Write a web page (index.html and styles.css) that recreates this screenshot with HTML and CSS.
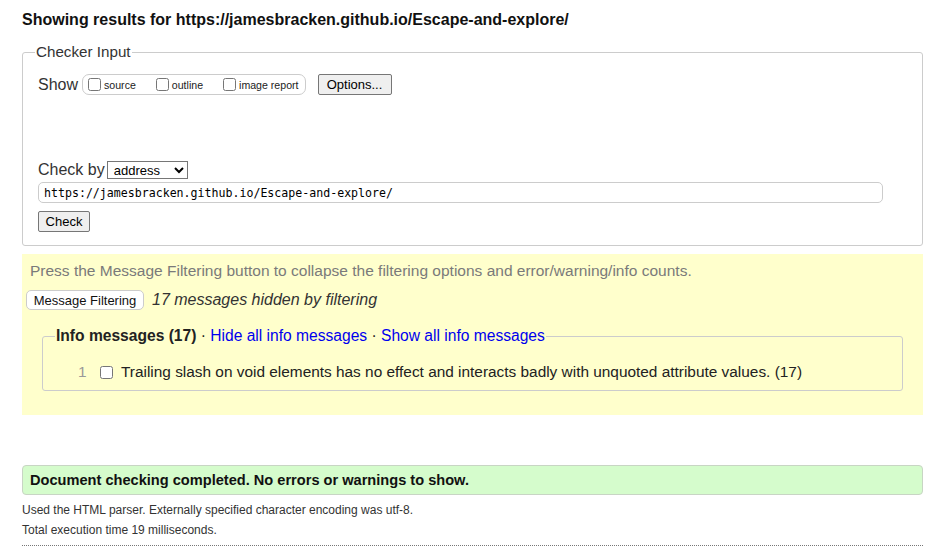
FILE: index.html
```html
<!DOCTYPE html>
<html>
<head>
<meta charset="utf-8">
<title>Nu Html Checker</title>
<link rel="stylesheet" href="styles.css">
</head>
<body>
<h2 class="title">Showing results for https://jamesbracken.github.io/Escape-and-explore/</h2>

<fieldset class="checker">
  <legend class="checker-legend">Checker Input</legend>
  <div class="show-row">
    <span class="lbl">Show</span>
    <span class="opts">
      <label class="opt"><input type="checkbox" class="cb">source</label>
      <label class="opt"><input type="checkbox" class="cb">outline</label>
      <label class="opt"><input type="checkbox" class="cb">image report</label>
    </span>
    <button class="btn btn-options">Options...</button>
  </div>
  <div class="checkby-row">
    <span class="lbl">Check by</span>
    <select class="sel"><option>address</option></select>
  </div>
  <input class="url" type="text" value="https://jamesbracken.github.io/Escape-and-explore/">
  <div class="check-row"><button class="btn btn-check">Check</button></div>
</fieldset>

<section class="filters">
  <p class="hint">Press the Message Filtering button to collapse the filtering options and error/warning/info counts.</p>
  <div class="filter-row">
    <button class="btn-filter">Message Filtering</button>
    <span class="hidden-count">17 messages hidden by filtering</span>
  </div>
  <fieldset class="info">
    <legend class="info-legend"><strong>Info messages (17)</strong> · <a class="lnk" href="#">Hide all info messages</a> · <a class="lnk" href="#">Show all info messages</a></legend>
    <div class="msg-row">
      <span class="num">1</span>
      <input type="checkbox" class="cb cb-msg">
      <span class="msg">Trailing slash on void elements has no effect and interacts badly with unquoted attribute values. (17)</span>
    </div>
  </fieldset>
</section>

<p class="success">Document checking completed. No errors or warnings to show.</p>
<p class="stats">Used the HTML parser. Externally specified character encoding was utf-8.</p>
<p class="stats">Total execution time 19 milliseconds.</p>
<hr class="rule">
</body>
</html>
```
FILE: styles.css
```css
html, body {
  margin: 0;
  padding: 0;
  background: #fff;
}
body {
  padding: 0 13px 0 22px;
  font-family: "Liberation Sans", Arial, sans-serif;
  color: #222;
}
.title {
  margin: 0;
  padding-top: 11px;
  font-size: 16px;
  line-height: 18px;
  font-weight: bold;
  color: #111;
}
.checker {
  margin: 14px 0 0 0;
  padding: 13px 15px 13px 15px;
  border: 1px solid #ccc;
  border-radius: 3px;
}
.checker-legend {
  padding: 0 1px;
  margin-left: -3px;
  font-size: 15.2px;
  line-height: 18px;
  color: #333;
}
.show-row {
  display: flex;
  align-items: center;
  height: 21px;
}
.lbl {
  font-size: 16px;
  line-height: 19px;
  color: #333;
  margin-right: 4px;
}
.opts {
  display: inline-flex;
  align-items: center;
  height: 19px;
  padding: 0 6px 0 1px;
  border: 1px solid #ccc;
  border-radius: 7px;
  gap: 16px;
}
.opt {
  display: inline-flex;
  align-items: center;
  font-size: 10.6px;
  color: #222;
}
.cb {
  width: 13px;
  height: 13px;
  margin: 0 3px 0 4px;
}
.btn {
  font-family: "Liberation Sans", Arial, sans-serif;
  font-size: 13px;
  height: 21px;
  padding: 0 8px;
  border: 1px solid #767676;
  border-radius: 2px;
  background: #efefef;
  color: #000;
}
.btn-options {
  margin-left: 12px;
  width: 74px;
}
.checkby-row {
  display: flex;
  align-items: center;
  margin-top: 65px;
  height: 19px;
}
.checkby-row .lbl {
  margin-right: 2px;
}
.sel {
  width: 81px;
  height: 18px;
  font-family: "Liberation Sans", Arial, sans-serif;
  font-size: 13px;
  border: 1px solid #767676;
  border-radius: 0;
  background: #fff;
  padding: 0 0 0 2px;
}
.url {
  display: block;
  box-sizing: border-box;
  margin-top: 3px;
  width: 845px;
  height: 21px;
  padding: 0 5px;
  border: 1px solid #ccc;
  border-radius: 5px;
  font-family: "DejaVu Sans Mono", "Liberation Mono", monospace;
  font-size: 11.6px;
  color: #000;
}
.check-row {
  margin-top: 8px;
  display: flex;
}
.btn-check {
  width: 52px;
  padding: 0;
}
.filters {
  margin-top: 8px;
  background: #ffc;
  padding: 8px 20px 24px 4px;
}
.hint {
  margin: 0;
  padding-left: 4px;
  font-size: 15.5px;
  line-height: 18px;
  color: #7a7a7a;
}
.filter-row {
  display: flex;
  align-items: center;
  margin-top: 10px;
}
.btn-filter {
  font-family: "Liberation Sans", Arial, sans-serif;
  font-size: 13px;
  height: 20px;
  width: 118px;
  padding: 0;
  background: #fff;
  border: 1px solid #ccc;
  border-radius: 5px;
  color: #111;
}
.hidden-count {
  margin-left: 8px;
  font-style: italic;
  font-size: 16px;
  color: #333;
}
.info {
  margin: 17px 0 0 16px;
  padding: 18px 10px 9px 10px;
  border: 1px solid #ccc;
  border-radius: 3px;
}
.info-legend {
  padding: 0 1px;
  margin-left: 2px;
  font-size: 15.6px;
  line-height: 18px;
  color: #222;
}
.lnk {
  color: #00e;
  text-decoration: none;
  font-weight: normal;
}
.msg-row {
  display: flex;
  align-items: center;
  height: 18px;
}
.num {
  margin-left: 25px;
  width: 20px;
  font-size: 15.4px;
  color: #999;
}
.cb-msg {
  margin: 0 8px 0 2px;
}
.msg {
  font-size: 15.4px;
  color: #222;
}
.success {
  margin: 50px 0 0 0;
  height: 28px;
  line-height: 28px;
  padding: 0 7px;
  background: #d5fccc;
  border: 1px solid #c8d5c4;
  border-radius: 4px;
  font-size: 14.6px;
  font-weight: bold;
  color: #111;
}
.stats {
  margin: 8px 0 0 0;
  font-size: 12px;
  line-height: 14px;
  color: #333;
}
.stats + .stats {
  margin-top: 6px;
}
.rule {
  margin: 8px 0 0 0;
  border: 0;
  border-top: 1px dotted #777;
  height: 0;
}
```
